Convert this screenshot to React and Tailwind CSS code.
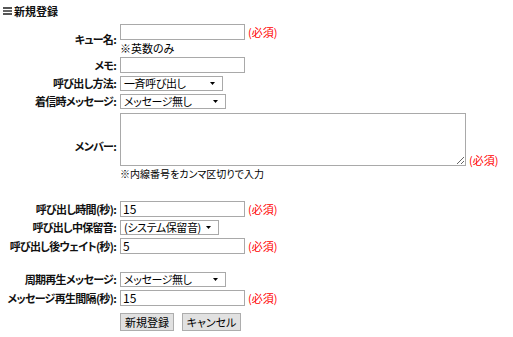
import React from 'react'

const FONT = "font-['Noto_Sans_CJK_JP','Liberation_Sans',sans-serif] [font-feature-settings:'palt']"

const Arrow = () => (
  <svg width="5" height="3" viewBox="0 0 5 3" className="shrink-0 ml-[4px]">
    <polygon points="0,0 5,0 2.5,3" fill="#000" />
  </svg>
)

const Select = ({ value, width }) => (
  <div
    className={`flex items-center h-[15px] border border-[#a9a9a9] bg-white pl-[3px] pr-[7px] text-[11px] leading-none text-black tracking-[-0.4px] ${width}`}
  >
    <span className="flex-1 whitespace-nowrap">{value}</span>
    <Arrow />
  </div>
)

const Input = ({ value = '', width = 'w-[125px]' }) => (
  <div className={`flex items-center h-[16px] border border-[#a9a9a9] bg-white pl-[2px] text-[12px] leading-none text-black ${width}`}>
    {value}
  </div>
)

const Required = () => <span className="ml-[3px] text-[11px] leading-none text-[#ff0000]">(必須)</span>

const Row = ({ label, className = '', children }) => (
  <div className={`flex items-center ${className}`}>
    <div className="w-[117px] shrink-0 text-right text-[11px] font-bold leading-none text-[#111] whitespace-nowrap tracking-[-0.7px] pr-[1px]">
      {label}:
    </div>
    <div className="ml-[3px]">{children}</div>
  </div>
)

export default function App() {
  return (
    <div className={`w-[513px] h-[337px] bg-white ${FONT}`}>
      <div className="flex items-center pt-[5px] pl-[3px] h-[17px]">
        <div className="flex flex-col gap-[1px] w-[9px]">
          <div className="h-[2px] bg-[#555]" />
          <div className="h-[2px] bg-[#666]" />
          <div className="h-[2px] bg-[#555]" />
        </div>
        <span className="ml-[2px] text-[11px] font-bold leading-none text-[#111]">新規登録</span>
      </div>

      <Row label="キュー名" className="mt-[7px]">
        <div className="flex items-center">
          <Input />
          <Required />
        </div>
        <div className="text-[11px] leading-[12px] mt-[2px] text-black">※英数のみ</div>
      </Row>

      <Row label="メモ" className="mt-[3px]">
        <Input />
      </Row>

      <Row label="呼び出し方法" className="mt-[3px]">
        <Select value="一斉呼び出し" width="w-[103px]" />
      </Row>

      <Row label="着信時メッセージ" className="mt-[3px]">
        <Select value="メッセージ無し" width="w-[106px]" />
      </Row>

      <Row label="メンバー" className="mt-[4px]">
        <div className="flex items-end">
          <textarea className="block w-[346px] h-[53px] border border-[#a9a9a9] bg-white outline-none" />
          <Required />
        </div>
        <div className="text-[10px] leading-[12px] mt-[2px] text-black">※内線番号をカンマ区切りで入力</div>
      </Row>

      <Row label="呼び出し時間(秒)" className="mt-[21px]">
        <div className="flex items-center">
          <Input value="15" />
          <Required />
        </div>
      </Row>

      <Row label="呼び出し中保留音" className="mt-[3px]">
        <Select value="(システム保留音)" width="w-[99px]" />
      </Row>

      <Row label="呼び出し後ウェイト(秒)" className="mt-[3px]">
        <div className="flex items-center">
          <Input value="5" />
          <Required />
        </div>
      </Row>

      <Row label="周期再生メッセージ" className="mt-[18px]">
        <Select value="メッセージ無し" width="w-[106px]" />
      </Row>

      <Row label="メッセージ再生間隔(秒)" className="mt-[3px]">
        <div className="flex items-center">
          <Input value="15" />
          <Required />
        </div>
      </Row>

      <div className="flex gap-[8px] ml-[120px] mt-[7px]">
        <button className="h-[18px] w-[54px] border border-[#adadad] bg-[#e1e1e1] text-[11px] leading-none text-black">
          新規登録
        </button>
        <button className="h-[18px] w-[59px] border border-[#adadad] bg-[#e1e1e1] text-[11px] leading-none text-black">
          キャンセル
        </button>
      </div>
    </div>
  )
}
